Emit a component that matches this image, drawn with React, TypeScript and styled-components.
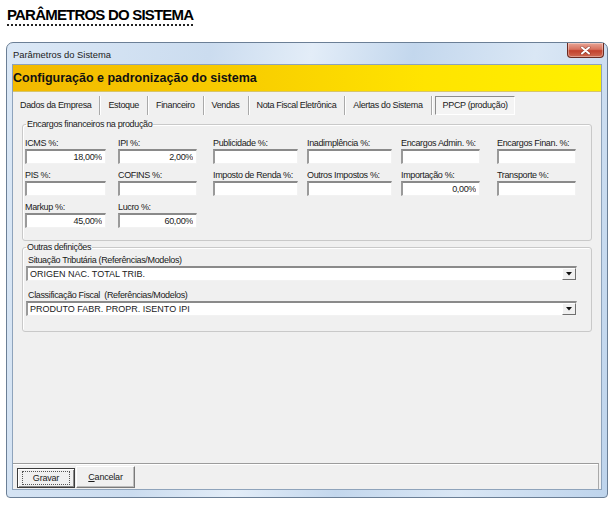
import React from 'react'
import styled, { createGlobalStyle } from 'styled-components'

const uiFont = `"Liberation Sans", Arial, sans-serif`

const GlobalStyle = createGlobalStyle`
  html, body {
    margin: 0;
    padding: 0;
    background: #ffffff;
  }
`

const Page = styled.div`
  padding: 6px 0 0 6px;
  width: 615px;
  height: 516px;
  box-sizing: border-box;
`

const Heading = styled.h1`
  margin: 0 0 0 1px;
  display: inline-block;
  font-family: "Liberation Sans", Arial, sans-serif;
  font-weight: 700;
  font-size: 15px;
  line-height: 18px;
  letter-spacing: -0.8px;
  color: #000;
  border-bottom: 2px dotted #222;
`

const Window = styled.div`
  margin-top: 16px;
  width: 602px;
  height: 456px;
  box-sizing: border-box;
  display: flex;
  flex-direction: column;
  padding: 0 5px 7px 5px;
  border: 1px solid #6b7f96;
  border-radius: 7px 7px 4px 4px;
  background: linear-gradient(100deg, #dbe8f6 0%, #cbdcef 30%, #e3edf8 45%, #c3d7ed 60%, #dae7f5 78%, #bed4ec 100%);
`

const TitleBar = styled.div`
  height: 21px;
  display: flex;
  align-items: flex-start;
  justify-content: space-between;
`

const TitleText = styled.span`
  font-family: "Liberation Sans", Arial, sans-serif;
  font-size: 9.4px;
  line-height: 12px;
  margin: 6px 0 0 1px;
  color: #1b1b1b;
`

const CloseButton = styled.div`
  width: 37px;
  height: 15px;
  margin-right: -2px;
  box-sizing: border-box;
  border: 1px solid #6a2b22;
  border-top: none;
  border-radius: 0 0 4px 4px;
  background: linear-gradient(180deg, #e9a596 0%, #d7725f 45%, #c2412c 55%, #cf6a52 100%);
  display: flex;
  align-items: center;
  justify-content: center;
  box-shadow: inset 0 0 0 1px rgba(255, 255, 255, 0.35);
`

const Client = styled.div`
  flex: 1;
  display: flex;
  flex-direction: column;
  background: #f0f0f0;
  border: 1px solid #8ea3bb;
`

const Banner = styled.div`
  height: 26px;
  display: flex;
  align-items: center;
  background: linear-gradient(90deg, #f2b900 0%, #f7ca00 35%, #ffe400 70%, #fff000 100%);
  border-bottom: 1px solid #d7c56a;
  font-family: "Liberation Sans", Arial, sans-serif;
  font-weight: 700;
  font-size: 12.5px;
  color: #111;
`

const TabStrip = styled.div`
  display: flex;
  height: 19px;
  margin-top: 4px;
`

const Tab = styled.div<{ $active?: boolean }>`
  font-family: ${uiFont};
  font-size: 9px;
  letter-spacing: -0.35px;
  line-height: 19px;
  color: #1a1a1a;
  padding: 0 8px;
  box-sizing: border-box;
  border-right: ${p => (p.$active ? '1px solid #ffffff' : '1px solid #a9a9a9')};
  box-shadow: ${p => (p.$active ? 'none' : '1px 0 0 #ffffff')};
  &:first-child {
    padding-left: 7px;
  }
  ${p =>
    p.$active &&
    `
    margin-left: 3px;
    border-top: 1px solid #8c8c8c;
    border-left: 1px solid #8c8c8c;
    border-bottom: 1px solid #ffffff;
    background: #f4f4f4;
    line-height: 17px;
    padding: 0 6px 0 7px;
  `}
`

const Group = styled.fieldset<{ $gap: number; $top: number; $bottom: number }>`
  margin: ${p => p.$gap}px 9px 0 9px;
  padding: ${p => p.$top}px 14px ${p => p.$bottom}px 2px;
  border: 1px solid #c9c9c9;
  border-radius: 3px;
  box-shadow: inset 1px 1px 0 #ffffff;
  min-width: 0;
`

const Legend = styled.legend`
  font-family: ${uiFont};
  font-size: 9px;
  letter-spacing: -0.35px;
  line-height: 12px;
  color: #1a1a1a;
  padding: 0 1px;
  margin-left: 1px;
`

const FieldGrid = styled.div`
  display: grid;
  grid-template-columns: 93px 95px 94px 94px 96px 96px;
  row-gap: 5px;
`

const FieldBox = styled.div`
  display: flex;
  flex-direction: column;
`

const Label = styled.span<{ $indent?: number }>`
  font-family: ${uiFont};
  font-size: 9px;
  letter-spacing: -0.35px;
  line-height: 12px;
  height: 12px;
  color: #1a1a1a;
  white-space: pre;
  padding-left: ${p => p.$indent ?? 0}px;
`

const TextBox = styled.input<{ $w: number }>`
  width: ${p => p.$w}px;
  height: 15px;
  box-sizing: border-box;
  margin: 0;
  padding: 0 3px 0 2px;
  font-family: ${uiFont};
  font-size: 9px;
  letter-spacing: -0.35px;
  color: #1a1a1a;
  text-align: right;
  background: #ffffff;
  border-style: solid;
  border-width: 2px 1px 1px 2px;
  border-color: #8a8a8a #f2f2f2 #f2f2f2 #9a9a9a;
  outline: none;
`

const Combo = styled.div`
  height: 15px;
  box-sizing: border-box;
  display: flex;
  align-items: center;
  justify-content: space-between;
  background: #ffffff;
  border-style: solid;
  border-width: 2px 1px 1px 2px;
  border-color: #8a8a8a #f2f2f2 #f2f2f2 #9a9a9a;
  padding-left: 2px;
  margin-left: 1px;
  font-family: ${uiFont};
  font-size: 9px;
  color: #1a1a1a;
`

const ComboButton = styled.span`
  width: 14px;
  height: 12px;
  box-sizing: border-box;
  display: flex;
  align-items: center;
  justify-content: center;
  background: #f0f0f0;
  border-style: solid;
  border-width: 1px;
  border-color: #ffffff #6f6f6f #6f6f6f #ffffff;
`

const ComboSpacer = styled.div`
  height: 8px;
`

const ButtonBar = styled.div`
  margin-top: auto;
  margin-right: 2px;
  height: 26px;
  box-sizing: border-box;
  display: flex;
  align-items: flex-end;
  gap: 1px;
  padding: 0 0 1px 4px;
  border-top: 1px solid #9c9c9c;
  border-right: 1px solid #a9a9a9;
  box-shadow: inset 0 1px 0 #ffffff;
`

const Button = styled.div<{ $default?: boolean }>`
  width: ${p => (p.$default ? 58 : 59)}px;
  height: ${p => (p.$default ? 20 : 22)}px;
  box-sizing: border-box;
  display: flex;
  align-items: center;
  justify-content: center;
  font-family: ${uiFont};
  font-size: 9px;
  letter-spacing: -0.2px;
  color: #1a1a1a;
  background: #f0f0f0;
  border-style: solid;
  border-width: 1px;
  border-color: ${p => (p.$default ? '#3c3c3c' : '#ffffff #7a7a7a #7a7a7a #ffffff')};
  box-shadow: ${p => (p.$default ? 'inset 1px 1px 0 #ffffff, inset -1px -1px 0 #8a8a8a' : 'inset -1px -1px 0 #bdbdbd')};
`

const FocusRing = styled.span`
  padding: 1px 10px;
  outline: 1px dotted #555;
`

const Mnemonic = styled.span`
  text-decoration: underline;
`

type FieldDef = { label: string; w: number; value?: string }

const rows: (FieldDef | null)[][] = [
  [
    { label: 'ICMS %:', w: 81, value: '18,00%' },
    { label: 'IPI %:', w: 79, value: '2,00%' },
    { label: 'Publicidade %:', w: 85 },
    { label: 'Inadimplência %:', w: 85 },
    { label: 'Encargos Admin. %:', w: 79 },
    { label: 'Encargos Finan. %:', w: 79 }
  ],
  [
    { label: 'PIS %:', w: 81 },
    { label: 'COFINS %:', w: 79 },
    { label: 'Imposto de Renda %:', w: 85 },
    { label: 'Outros Impostos %:', w: 85 },
    { label: 'Importação %:', w: 79, value: '0,00%' },
    { label: 'Transporte %:', w: 79 }
  ],
  [
    { label: 'Markup %:', w: 81, value: '45,00%' },
    { label: 'Lucro %:', w: 79, value: '60,00%' },
    null,
    null,
    null,
    null
  ]
]

const tabs = ['Dados da Empresa', 'Estoque', 'Financeiro', 'Vendas', 'Nota Fiscal Eletrônica', 'Alertas do Sistema']

const CloseGlyph = () => (
  <svg width="11" height="9" viewBox="0 0 11 9">
    <path d="M2 1.5 L9 7.5 M9 1.5 L2 7.5" stroke="#5a1c12" strokeWidth="3" strokeLinecap="round" opacity="0.5" />
    <path d="M2 1.5 L9 7.5 M9 1.5 L2 7.5" stroke="#ffffff" strokeWidth="2" strokeLinecap="round" />
  </svg>
)

const DropArrow = () => (
  <svg width="6" height="4" viewBox="0 0 6 4">
    <path d="M0 0 H6 L3 3.5 Z" fill="#111" />
  </svg>
)

const Field = ({ label, w, value }: FieldDef) => (
  <FieldBox>
    <Label>{label}</Label>
    <TextBox $w={w} readOnly value={value ?? ''} />
  </FieldBox>
)

const ComboField = ({ label, value }: { label: string; value: string }) => (
  <FieldBox>
    <Label $indent={3}>{label}</Label>
    <Combo>
      <span>{value}</span>
      <ComboButton>
        <DropArrow />
      </ComboButton>
    </Combo>
  </FieldBox>
)

export default function App() {
  return (
    <Page>
      <GlobalStyle />
      <Heading>PARÂMETROS DO SISTEMA</Heading>
      <Window>
        <TitleBar>
          <TitleText>Parâmetros do Sistema</TitleText>
          <CloseButton>
            <CloseGlyph />
          </CloseButton>
        </TitleBar>
        <Client>
          <Banner>Configuração e padronização do sistema</Banner>
          <TabStrip>
            {tabs.map(t => (
              <Tab key={t}>{t}</Tab>
            ))}
            <Tab $active>PPCP (produção)</Tab>
          </TabStrip>

          <Group $gap={3} $top={7} $bottom={12}>
            <Legend>Encargos financeiros na produção</Legend>
            <FieldGrid>
              {rows.flat().map((f, i) => (f ? <Field key={i} {...f} /> : <div key={i} />))}
            </FieldGrid>
          </Group>

          <Group $gap={0} $top={1} $bottom={15}>
            <Legend>Outras definições</Legend>
            <ComboField label="Situação Tributária (Referências/Modelos)" value="ORIGEN NAC. TOTAL TRIB." />
            <ComboSpacer />
            <ComboField label="Classificação Fiscal  (Referências/Modelos)" value="PRODUTO FABR. PROPR. ISENTO IPI" />
          </Group>

          <ButtonBar>
            <Button $default>
              <FocusRing>Gravar</FocusRing>
            </Button>
            <Button>
              <span>
                <Mnemonic>C</Mnemonic>ancelar
              </span>
            </Button>
          </ButtonBar>
        </Client>
      </Window>
    </Page>
  )
}
